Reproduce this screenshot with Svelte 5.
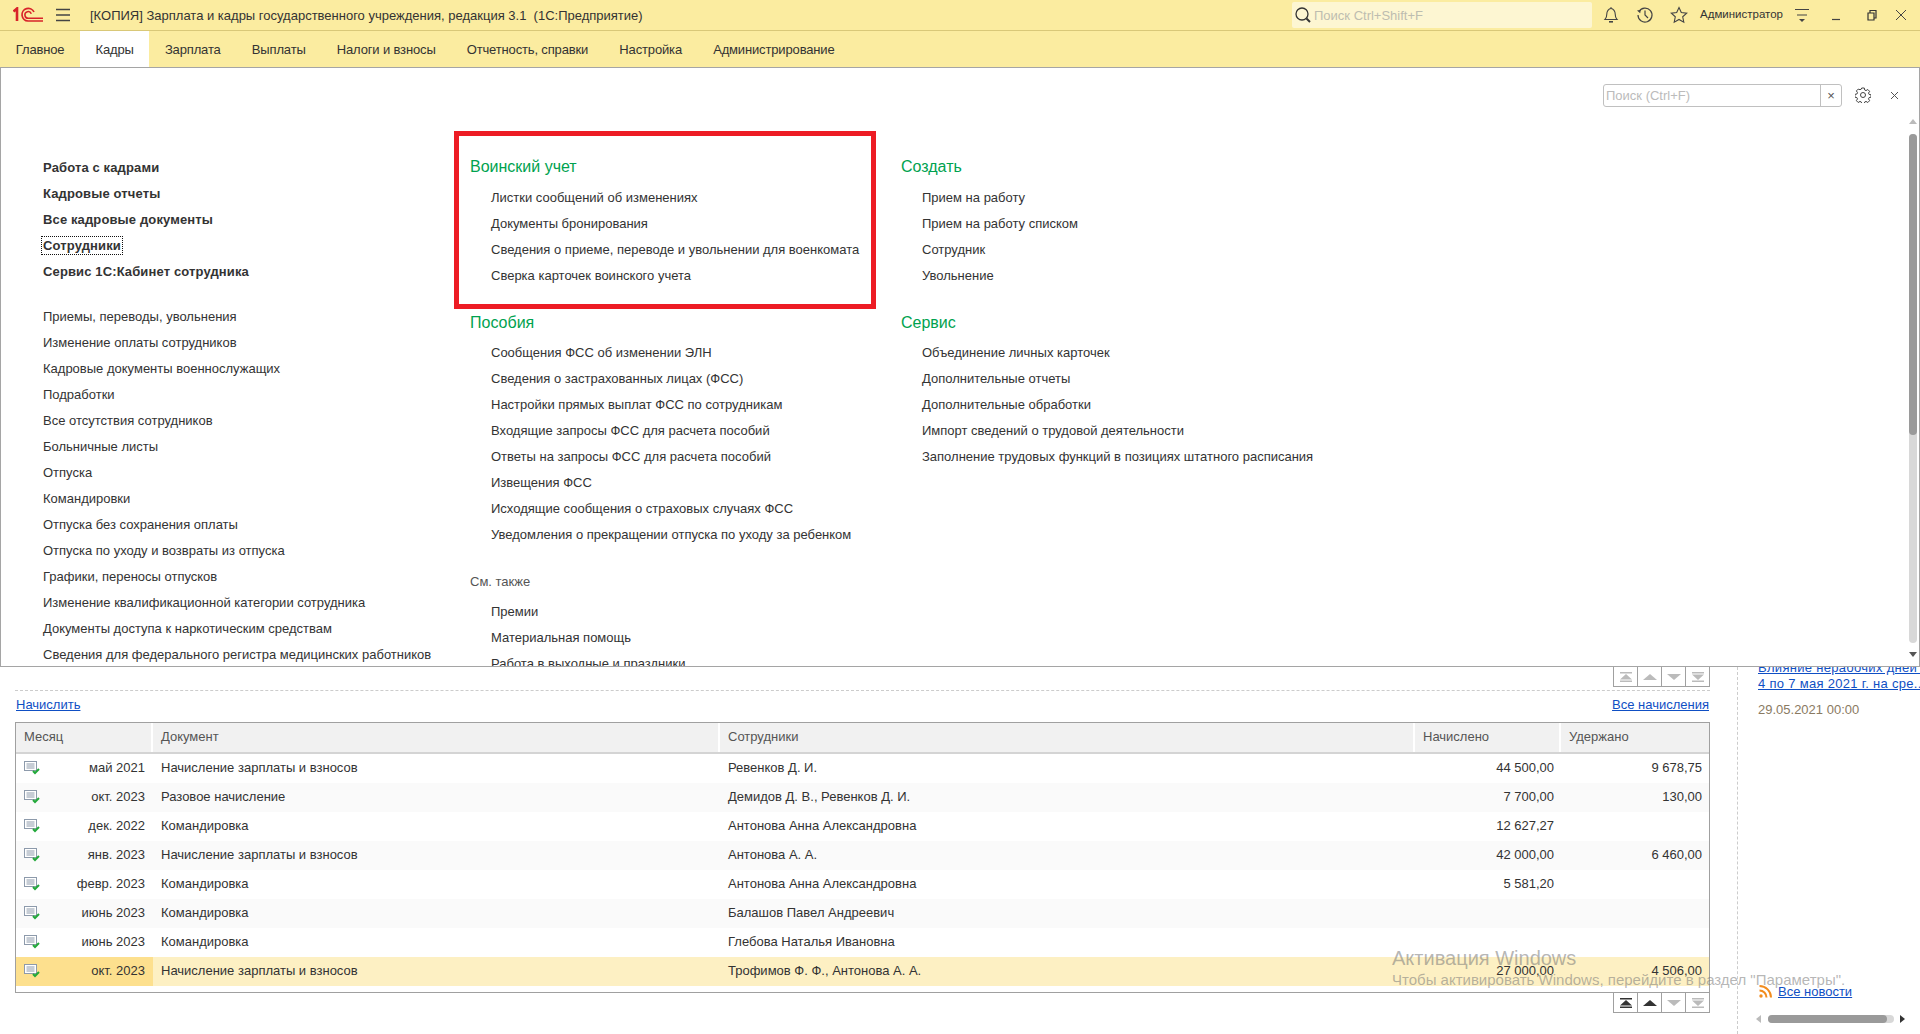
<script>
  const tabs = ['Главное','Кадры','Зарплата','Выплаты','Налоги и взносы','Отчетность, справки','Настройка','Администрирование'];
  const bold = ['Работа с кадрами','Кадровые отчеты','Все кадровые документы','Сотрудники','Сервис 1С:Кабинет сотрудника'];
  const left = ['Приемы, переводы, увольнения','Изменение оплаты сотрудников','Кадровые документы военнослужащих','Подработки','Все отсутствия сотрудников','Больничные листы','Отпуска','Командировки','Отпуска без сохранения оплаты','Отпуска по уходу и возвраты из отпуска','Графики, переносы отпусков','Изменение квалификационной категории сотрудника','Документы доступа к наркотическим средствам','Сведения для федерального регистра медицинских работников'];
  const military = ['Листки сообщений об изменениях','Документы бронирования','Сведения о приеме, переводе и увольнении для военкомата','Сверка карточек воинского учета'];
  const benefits = ['Сообщения ФСС об изменении ЭЛН','Сведения о застрахованных лицах (ФСС)','Настройки прямых выплат ФСС по сотрудникам','Входящие запросы ФСС для расчета пособий','Ответы на запросы ФСС для расчета пособий','Извещения ФСС','Исходящие сообщения о страховых случаях ФСС','Уведомления о прекращении отпуска по уходу за ребенком'];
  const also = ['Премии','Материальная помощь','Работа в выходные и праздники'];
  const create = ['Прием на работу','Прием на работу списком','Сотрудник','Увольнение'];
  const service = ['Объединение личных карточек','Дополнительные отчеты','Дополнительные обработки','Импорт сведений о трудовой деятельности','Заполнение трудовых функций в позициях штатного расписания'];
  const rows = [
    ['май 2021','Начисление зарплаты и взносов','Ревенков Д. И.','44 500,00','9 678,75'],
    ['окт. 2023','Разовое начисление','Демидов Д. В., Ревенков Д. И.','7 700,00','130,00'],
    ['дек. 2022','Командировка','Антонова Анна Александровна','12 627,27',''],
    ['янв. 2023','Начисление зарплаты и взносов','Антонова А. А.','42 000,00','6 460,00'],
    ['февр. 2023','Командировка','Антонова Анна Александровна','5 581,20',''],
    ['июнь 2023','Командировка','Балашов Павел Андреевич','',''],
    ['июнь 2023','Командировка','Глебова Наталья Ивановна','',''],
    ['окт. 2023','Начисление зарплаты и взносов','Трофимов Ф. Ф., Антонова А. А.','27 000,00','4 506,00']
  ];
</script>

{#snippet navButtons(active)}
  <div class="pager">
    <span class="pg"><svg width="16" height="12" viewBox="0 0 16 12"><path d="M2 1h12v1.500H2zM8 3l6 5.500H2zM2 9.500h12V11H2z" fill={active ? '#333' : '#bbb'}/></svg></span>
    <span class="pg"><svg width="16" height="12" viewBox="0 0 16 12"><path d="M8 3l7 6H1z" fill={active ? '#333' : '#bbb'}/></svg></span>
    <span class="pg"><svg width="16" height="12" viewBox="0 0 16 12"><path d="M1 3h14l-7 6z" fill="#bbb"/></svg></span>
    <span class="pg"><svg width="16" height="12" viewBox="0 0 16 12"><path d="M2 1h12v1.500H2zM2 3.500h12l-6 5.500zM2 9.500h12V11H2z" fill="#bbb"/></svg></span>
  </div>
{/snippet}

{#snippet group(title, items)}
  <div class="group">
    <div class="gtitle">{title}</div>
    {#each items as it}<div class="gitem">{it}</div>{/each}
  </div>
{/snippet}

<div class="page">
  <header class="top">
    <svg class="logo" width="30" height="16" viewBox="0 0 30 16" fill="none">
      <path d="M0.500 4.500l3.500-3V14" stroke="#d8232a" stroke-width="2.600"/>
      <path d="M30 14H15A6.300 6.300 0 1 1 21 5" stroke="#d8232a" stroke-width="1.700"/>
      <path d="M30 11.200H15.500A3.300 3.300 0 1 1 18.300 6.800" stroke="#d8232a" stroke-width="1.500"/>
    </svg>
    <svg class="burger" width="16" height="14" viewBox="0 0 16 14"><path d="M1 1.500h14M1 7h14M1 12.500h14" stroke="#444" stroke-width="1.300"/></svg>
    <div class="title">[КОПИЯ] Зарплата и кадры государственного учреждения, редакция 3.1&nbsp; (1С:Предприятие)</div>
    <div class="gsearch">
      <svg width="18" height="18" viewBox="0 0 18 18" fill="none"><circle cx="8" cy="8" r="6" stroke="#333" stroke-width="1.300"/><path d="M12.500 12.500L16 16" stroke="#333" stroke-width="2"/></svg>
      <span>Поиск Ctrl+Shift+F</span>
    </div>
    <div class="ticons">
      <svg class="ic1" width="16" height="18" viewBox="0 0 16 18" fill="none"><path d="M2 13.500c1.500-1.500 1.800-3 1.800-5.500S5.500 2.500 8 2.500 12.200 5.500 12.200 8s.3 4 1.800 5.500z" stroke="#444" stroke-width="1.100"/><path d="M6 15.800h4" stroke="#444" stroke-width="1.600"/><path d="M8 1v1.500" stroke="#444"/></svg>
      <svg class="ic2" width="18" height="18" viewBox="0 0 18 18" fill="none"><path d="M3 5.500A7 7 0 1 1 2 9" stroke="#444" stroke-width="1.200"/><path d="M1 4.500l3.800-.8-.6 3.600z" fill="#444"/><path d="M9 4.500V9l3 3" stroke="#444" stroke-width="1.200"/></svg>
      <svg class="ic3" width="18" height="18" viewBox="0 0 18 18" fill="none"><path d="M9 1.500l2.300 5 5.400.6-4 3.700 1.100 5.400L9 13.500l-4.800 2.700 1.100-5.400-4-3.700 5.400-.6z" stroke="#444" stroke-width="1.100"/></svg>
      <span class="user">Администратор</span>
      <svg class="ic4" width="16" height="16" viewBox="0 0 16 16"><path d="M1 2.500h14M3 8h10" stroke="#444" stroke-width="1.200"/><path d="M5 12h6l-3 3z" fill="#444"/></svg>
      <svg class="ic5" width="12" height="12" viewBox="0 0 12 12"><path d="M2 10.500h8" stroke="#444" stroke-width="1.200"/></svg>
      <svg class="ic6" width="12" height="12" viewBox="0 0 12 12" fill="none"><path d="M2 4h6v7H2zM4 4V1.500h6V9H8" stroke="#333" stroke-width="1.200"/></svg>
      <svg class="ic7" width="12" height="12" viewBox="0 0 12 12"><path d="M1 1l10 10M11 1L1 11" stroke="#444" stroke-width="1"/></svg>
    </div>
  </header>

  <nav class="tabs">
    {#each tabs as t}<div class="tab" class:active={t === 'Кадры'}>{t}</div>{/each}
  </nav>

  <main class="under">
    <section class="work">
      {@render navButtons(false)}
      <div class="dash"></div>
      <div class="links"><a href="#n">Начислить</a><a href="#a">Все начисления</a></div>
      <div class="table">
        <div class="row head">
          <div>Месяц</div><div>Документ</div><div>Сотрудники</div><div>Начислено</div><div>Удержано</div>
        </div>
        {#each rows as r, i}
          <div class="row body" class:alt={i % 2 === 1} class:sel={i === 7}>
            <div class="month">
              <svg width="16" height="14" viewBox="0 0 16 14" fill="none"><rect x="0.500" y="0.500" width="12" height="9" fill="#fff" stroke="#8d9aab"/><path d="M2.500 3h8M2.500 5h8M2.500 7h8" stroke="#8d9aab"/><path d="M9 10l2 2 4-4" stroke="#22a83a" stroke-width="2"/></svg>
              <span>{r[0]}</span>
            </div>
            <div>{r[1]}</div><div>{r[2]}</div><div class="num">{r[3]}</div><div class="num">{r[4]}</div>
          </div>
        {/each}
      </div>
      {@render navButtons(true)}
    </section>
    <aside class="news">
      <a class="nl" href="#1">Влияние нерабочих дней с</a>
      <a class="nl" href="#2">4 по 7 мая 2021 г. на сре..</a>
      <div class="date">29.05.2021 00:00</div>
      <div class="all">
        <svg width="13" height="13" viewBox="0 0 13 13" fill="none"><circle cx="2" cy="11" r="1.700" fill="#f28c1e"/><path d="M0.500 5.500a7 7 0 0 1 7 7M0.500 1a11.500 11.500 0 0 1 11.500 11.500" stroke="#f28c1e" stroke-width="2"/></svg>
        <a href="#all">Все новости</a>
      </div>
      <div class="hscroll">
        <svg width="6" height="8" viewBox="0 0 6 8"><path d="M5 0v8L0 4z" fill="#bbb"/></svg>
        <div class="htrack"><div class="hthumb"></div></div>
        <svg width="6" height="8" viewBox="0 0 6 8"><path d="M0 0v8l5-4z" fill="#333"/></svg>
      </div>
    </aside>
  </main>

  <section class="panel">
    <div class="phead">
      <div class="psearch"><span class="ph">Поиск (Ctrl+F)</span><span class="px">×</span></div>
      <svg class="gear" width="16" height="16" viewBox="0 0 16 16" fill="none"><path d="M6.700 1h2.600l.4 2 1.300.6 1.800-1.100 1.800 1.800-1.100 1.800.6 1.300 2 .4v2.400l-2 .4-.6 1.300 1.100 1.800-1.800 1.800-1.800-1.100-1.300.6-.4 2H6.700l-.4-2-1.300-.6-1.800 1.100-1.800-1.800 1.100-1.800-.6-1.300-2-.4V7.400l2-.4.6-1.300-1.100-1.800 1.800-1.800L5 2.700 6.300 2.100z" stroke="#444"/><circle cx="8" cy="8" r="2.500" stroke="#444"/></svg>
      <svg class="pclose" width="9" height="9" viewBox="0 0 9 9"><path d="M1 1l7 7M8 1L1 8" stroke="#555"/></svg>
    </div>
    <div class="cols">
      <div class="col1">
        <div class="blist">
          {#each bold as b}<div class="bitem"><span class:focus={b === 'Сотрудники'}>{b}</span></div>{/each}
        </div>
        {#each left as l}<div class="litem">{l}</div>{/each}
      </div>
      <div class="col2">
        {@render group('Воинский учет', military)}
        {@render group('Пособия', benefits)}
        <div class="also">См. также</div>
        {#each also as a}<div class="gitem">{a}</div>{/each}
      </div>
      <div class="col3">
        {@render group('Создать', create)}
        {@render group('Сервис', service)}
      </div>
    </div>
    <div class="redbox"></div>
    <div class="vscroll">
      <svg width="8" height="6" viewBox="0 0 8 6"><path d="M0 5h8L4 0z" fill="#bbb"/></svg>
      <div class="vtrack"><div class="vthumb"></div></div>
      <svg width="8" height="6" viewBox="0 0 8 6"><path d="M0 0h8L4 5z" fill="#555"/></svg>
    </div>
  </section>

  <div class="activation">
    <div class="a1">Активация Windows</div>
    <div class="a2">Чтобы активировать Windows, перейдите в раздел "Параметры".</div>
  </div>
</div>

<style>
  :global(body) { margin: 0; background: #fff; }
  .page { position: relative; width: 1920px; height: 1034px; overflow: hidden; font: 13px/1 "Liberation Sans", Arial, sans-serif; color: #333; }
  a { color: #0f4fc4; text-decoration: underline; }

  .top { height: 30px; border-bottom: 1px solid #d9c878; background: #fbeca0; display: flex; align-items: center; }
  .logo { margin-left: 13px; flex: none; }
  .burger { margin-left: 12px; flex: none; }
  .title { margin-left: 19px; font-size: 13px; flex: 1; white-space: nowrap; color: #333; }
  .gsearch { width: 300px; height: 26px; margin-right: 11px; background: #fdf6d2; border-radius: 2px; display: flex; align-items: center; gap: 2px; box-sizing: border-box; padding-left: 2px; color: #bdbdb0; font-size: 13px; }
  .ticons { width: 317px; position: relative; height: 30px; display: flex; align-items: center; }
  .ic2 { margin-left: 17px; }
  .ic3 { margin-left: 16px; }
  .user { margin-left: 12px; font-size: 11.500px; width: 94px; color: #333; }
  .ic5 { margin-left: 20px; }
  .ic6 { margin-left: 23.500px; }
  .ic7 { margin-left: 17.500px; }

  .tabs { height: 36px; background: #fbeca0; display: flex; }
  .tab { padding: 1px 15.350px 0 15.800px; line-height: 35px; font-size: 13px; letter-spacing: -0.150px; }
  .tab.active { background: #fff; }

  .under { height: 967px; display: flex; box-sizing: border-box; padding-top: 600px; }
  .work { width: 1738px; box-sizing: border-box; padding: 0 27px 0 15px; border-right: 1px dashed #ccc; flex: none; }
  .pager { display: flex; justify-content: flex-end; height: 19px; }
  .pg { width: 23px; height: 100%; box-sizing: content-box; border: 1px solid #a0a0a0; border-top: 0; margin-left: -1px; display: flex; align-items: center; justify-content: center; background: #fff; }
  .dash { border-top: 1px dashed #ccc; margin-top: 4px; }
  .links { display: flex; justify-content: space-between; height: 31px; box-sizing: border-box; padding: 0 1px 5px 1px; align-items: center; }
  .table { border: 1px solid #a0a0a0; height: 271px; box-sizing: border-box; }
  .row { display: grid; grid-template-columns: 137px 567px 695px 146px 1fr; }
  .row > div { padding: 0 7px 2px 8px; white-space: nowrap; display: flex; align-items: center; min-width: 0; }
  .head { height: 29px; background: #f1f1f1; border-bottom: 2px solid #d4d4d4; color: #555; box-sizing: content-box; }
  .head > div { border-right: 2px solid #fff; box-sizing: border-box; }
  .head > div:last-child { border-right: 0; }
  .body { height: 29px; }
  .alt { background: #fafafa; }
  .sel { background: #fdf0c3; }
  .sel .month { background: #fde08e; }
  .row > .month { justify-content: space-between; padding-right: 8px; }
  .row > .num { justify-content: flex-end; }
  .news { padding: 0 0 0 20px; position: relative; flex: 1; }
  .nl { display: block; font-size: 13px; letter-spacing: .3px; white-space: nowrap; width: 162px; overflow: hidden; height: 16px; line-height: 16px; }
  .nl:first-child { margin-top: -7px; }
  .date { margin-top: 11px; color: #8a7a62; font-size: 13px; }
  .all { position: absolute; left: 21px; top: 318px; display: flex; gap: 6px; align-items: center; }
  .hscroll { position: absolute; left: 18px; top: 348px; display: flex; align-items: center; gap: 6px; width: 150px; }
  .htrack { width: 126px; height: 8px; background: #d8d8d8; border-radius: 4px; }
  .hthumb { width: 119px; height: 8px; background: #9a9a9a; border-radius: 4px; }

  .panel { position: absolute; left: 0; top: 67px; width: 1920px; height: 600px; box-sizing: border-box; border: 1px solid #a5a5a5; background: #fff; overflow: hidden; }
  .phead { height: 40px; padding-top: 16px; display: flex; align-items: flex-start; box-sizing: content-box; padding-left: 1602px; }
  .psearch { width: 239px; height: 23px; box-sizing: border-box; border: 1px solid #c0c0c0; border-radius: 3px; display: flex; align-items: center; font-size: 13px; }
  .ph { width: 217px; padding-left: 2px; color: #bbb; box-sizing: border-box; border-right: 1px solid #c0c0c0; height: 21px; line-height: 21px; }
  .px { flex: 1; text-align: center; color: #555; font-size: 13px; }
  .gear { margin: 3px 0 0 13px; }
  .pclose { margin: 7px 0 0 19px; }
  .cols { display: flex; padding-left: 42px; }
  .col1 { width: 427px; flex: none; margin-top: 31px; }
  .col2 { width: 431px; flex: none; margin-top: 30px; }
  .col3 { margin-top: 30px; }
  .blist { margin-bottom: 19px; }
  .bitem { height: 26px; line-height: 26px; font-weight: 700; white-space: nowrap; letter-spacing: .13px; }
  .focus { outline: 1px dotted #111; outline-offset: 1px; }
  .litem { height: 26px; line-height: 26px; white-space: nowrap; }
  .group { margin-bottom: 21px; }
  .gtitle { color: #00a24f; font-size: 16px; height: 30.500px; line-height: 26px; }
  .gitem { height: 26px; line-height: 26px; padding-left: 21px; white-space: nowrap; }
  .also { height: 29.500px; line-height: 26px; color: #555; margin-top: 20px; }
  .redbox { position: absolute; left: 453px; top: 63px; width: 422px; height: 178px; box-sizing: border-box; border: 5px solid #ed1c24; }
  .vscroll { position: absolute; right: 2px; top: 51px; width: 8px; display: flex; flex-direction: column; align-items: center; gap: 9px; }
  .vtrack { width: 8px; height: 509px; background: #d8d8d8; border-radius: 4px; }
  .vthumb { width: 8px; height: 301px; background: #9a9a9a; border-radius: 4px; }

  .activation { position: absolute; left: 1392px; top: 947px; color: rgba(120,120,120,.55); white-space: nowrap; pointer-events: none; }
  .a1 { font-size: 20px; line-height: 22px; }
  .a2 { font-size: 15px; line-height: 22px; }
</style>
